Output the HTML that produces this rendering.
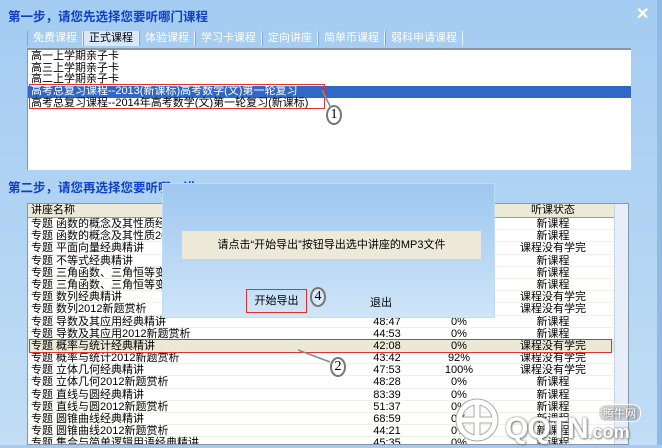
<!DOCTYPE html>
<html><head><meta charset="utf-8"><style>
*{margin:0;padding:0;box-sizing:border-box}
body{width:662px;height:445px;overflow:hidden;position:relative;background:linear-gradient(#a4cbf1,#b4d6f4 60%,#c2ddf5);font-family:"Liberation Sans","Noto Sans CJK SC",sans-serif;font-size:11px;color:#000}
.abs{position:absolute}
.title{color:#1040c8;font-weight:bold;font-size:12.5px;left:8px;white-space:nowrap}
.tabs{left:27px;top:31px;height:15px;display:flex;font-size:11px;color:#fff;line-height:14px}
.tabs span{padding:0 5px;border-right:1px solid #e8f2fc;border-left:1px solid #7fa6cf}
.tabs span.a{color:#000;background:#d8e8f8}
.list{left:27px;top:48px;width:604px;height:122px;background:#fff;border-top:2px solid #8a96a8;border-left:1px solid #8a96a8;padding-top:1px}
.list div{height:11.7px;line-height:11.7px;padding-left:3px;white-space:nowrap;font-size:11px}
.sel{background:#3168c6;color:#fff}
.tbl{left:27px;top:203px;width:602px;height:242px;background:#fff;border:1px solid #8a96a8;overflow:hidden}
.hdr{height:14px;background:#ece9d8;border-bottom:1px solid #a09c8c;line-height:13px;position:relative}
.row{height:12.2px;line-height:12.2px;position:relative;border-bottom:1px solid #f2f0e6;white-space:nowrap}
.row span,.hdr span{position:absolute}
.c1{left:3px}.c2{left:324px;width:70px;text-align:center}.c3{left:396px;width:70px;text-align:center}.c4{left:463px;width:124px;text-align:center}
.sb{right:0;top:0;width:14px;height:100%;background:#e6eefa;border-left:1px solid #c8d4e8}
.circ{border:2px solid #777;border-radius:50%;width:16px;height:20px;text-align:center;line-height:16px;font-family:"Liberation Serif",serif;font-size:14px;background:rgba(255,255,255,.3)}
.wm{color:#fff;text-shadow:0 0 2px #777,1px 1px 2px #888}
</style></head><body>
<div class="abs title" style="top:6px">第一步，请您先选择您要听哪门课程</div>
<div class="abs" style="left:636px;top:4px;color:#fff;font-size:16px;font-weight:bold">✕</div>
<div class="abs" style="left:657px;top:0;width:5px;height:445px;background:#8fbbe6"></div>
<div class="abs tabs"><span>免费课程</span><span class="a">正式课程</span><span>体验课程</span><span>学习卡课程</span><span>定向讲座</span><span>简单币课程</span><span>弱科申请课程</span></div>
<div class="abs list">
<div>高一上学期亲子卡</div><div>高三上学期亲子卡</div><div>高二上学期亲子卡</div>
<div class="sel">高考总复习课程--2013(新课标)高考数学(文)第一轮复习</div>
<div>高考总复习课程--2014年高考数学(文)第一轮复习(新课标)</div>
</div>
<div class="abs" style="left:29px;top:84px;width:296px;height:25px;border:1px solid #e03030"></div>
<div class="abs circ" style="left:326px;top:105px">1</div>
<div class="abs title" style="top:177px">第二步，请您再选择您要听哪一讲</div>
<div class="abs tbl">
<div class="hdr"><span class="c1">讲座名称</span><span class="c4">听课状态</span></div>
<div class="row"><span class="c1">专题 函数的概念及其性质经典精讲</span><span class="c4">新课程</span></div>
<div class="row"><span class="c1">专题 函数的概念及其性质2012新题赏析</span><span class="c4">新课程</span></div>
<div class="row"><span class="c1">专题 平面向量经典精讲</span><span class="c4">课程没有学完</span></div>
<div class="row"><span class="c1">专题 不等式经典精讲</span><span class="c4">新课程</span></div>
<div class="row"><span class="c1">专题 三角函数、三角恒等变换经典精讲</span><span class="c4">新课程</span></div>
<div class="row"><span class="c1">专题 三角函数、三角恒等变换2012</span><span class="c4">新课程</span></div>
<div class="row"><span class="c1">专题 数列经典精讲</span><span class="c4">课程没有学完</span></div>
<div class="row"><span class="c1">专题 数列2012新题赏析</span><span class="c4">课程没有学完</span></div>
<div class="row"><span class="c1">专题 导数及其应用经典精讲</span><span class="c2">48:47</span><span class="c3">0%</span><span class="c4">新课程</span></div>
<div class="row"><span class="c1">专题 导数及其应用2012新题赏析</span><span class="c2">44:53</span><span class="c3">0%</span><span class="c4">新课程</span></div>
<div class="row" style="background:#ebe8d6"><span class="c1">专题 概率与统计经典精讲</span><span class="c2">42:08</span><span class="c3">0%</span><span class="c4">课程没有学完</span></div>
<div class="row"><span class="c1">专题 概率与统计2012新题赏析</span><span class="c2">43:42</span><span class="c3">92%</span><span class="c4">课程没有学完</span></div>
<div class="row"><span class="c1">专题 立体几何经典精讲</span><span class="c2">47:53</span><span class="c3">100%</span><span class="c4">课程没有学完</span></div>
<div class="row"><span class="c1">专题 立体几何2012新题赏析</span><span class="c2">48:28</span><span class="c3">0%</span><span class="c4">新课程</span></div>
<div class="row"><span class="c1">专题 直线与圆经典精讲</span><span class="c2">83:39</span><span class="c3">0%</span><span class="c4">新课程</span></div>
<div class="row"><span class="c1">专题 直线与圆2012新题赏析</span><span class="c2">51:37</span><span class="c3">0%</span><span class="c4">新课程</span></div>
<div class="row"><span class="c1">专题 圆锥曲线经典精讲</span><span class="c2">68:59</span><span class="c3">0%</span><span class="c4">新课程</span></div>
<div class="row"><span class="c1">专题 圆锥曲线2012新题赏析</span><span class="c2">44:21</span><span class="c3">0%</span><span class="c4">新课程</span></div>
<div class="row"><span class="c1">专题 集合与简单逻辑用语经典精讲</span><span class="c2">45:35</span><span class="c3">0%</span><span class="c4">新课程</span></div>
<div class="abs sb"></div>
</div>
<div class="abs" style="left:29px;top:339px;width:583px;height:14px;border:1px solid #e03030"></div>
<svg class="abs" style="left:0;top:0" width="662" height="445"><g stroke="#888" stroke-width="1.5" fill="#888"><line x1="331" y1="108" x2="322" y2="90"/><line x1="330" y1="362" x2="298" y2="350"/><line x1="312" y1="292" x2="292" y2="293"/></g>
<g fill="none" stroke="#aaa" stroke-width="7"><circle cx="477" cy="420" r="18"/><line x1="477" y1="400" x2="477" y2="440"/><line x1="457" y1="420" x2="497" y2="420"/></g>
<g fill="none" stroke="#fff" stroke-width="5"><circle cx="477" cy="420" r="18"/><line x1="477" y1="400" x2="477" y2="440"/><line x1="457" y1="420" x2="497" y2="420"/></g></svg>
<div class="abs circ" style="left:330px;top:357px">2</div>
<div class="abs" style="left:162px;top:183px;width:333px;height:135px;background:linear-gradient(#9ec7ef,#cfe5f8);border:1px solid #c0dcf4">
<div class="abs" style="left:19px;top:47px;width:299px;height:28px;background:#ece9d8;text-align:center;line-height:28px">请点击“开始导出”按钮导出选中讲座的MP3文件</div>
<div class="abs" style="left:83px;top:105px;width:61px;height:24px;border:1px solid #e03030;text-align:center;line-height:22px">开始导出</div>
<div class="abs" style="left:207px;top:110px">退出</div>
</div>
<div class="abs circ" style="left:310px;top:287px">4</div>
<div class="abs wm" style="left:598px;top:404px;font-size:11px;border:1.5px solid #fff;border-radius:8px;padding:0 4px;background:rgba(150,150,150,.35)">腾牛网</div>
<div class="abs wm" style="left:505px;top:413px;font-size:30px;font-weight:bold;line-height:32px;letter-spacing:-1px">QQTN<span style="font-size:18px;letter-spacing:0">.com</span></div>
</body></html>
